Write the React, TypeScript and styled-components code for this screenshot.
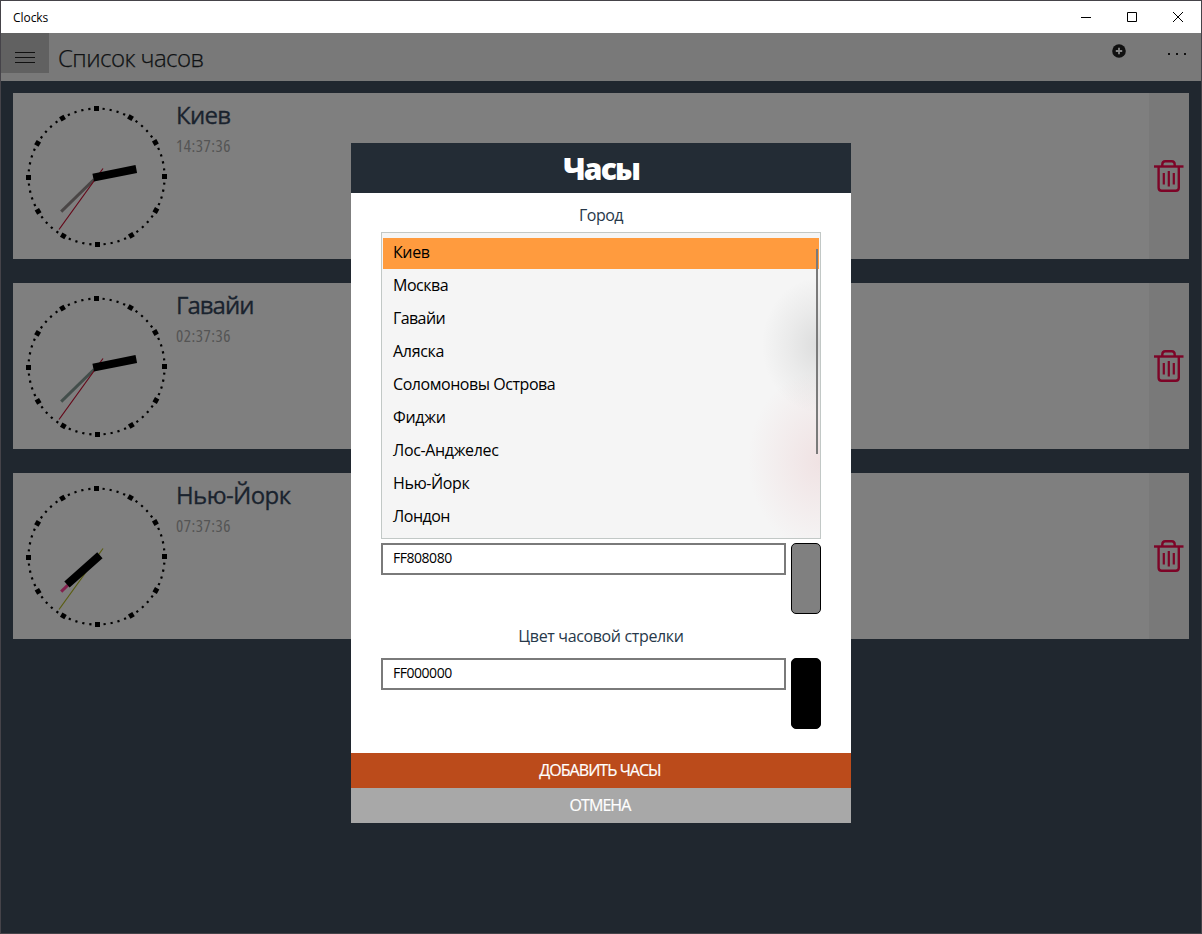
import React from "react";
import styled, { createGlobalStyle } from "styled-components";

const GlobalStyle = createGlobalStyle`
  *, *::before, *::after { box-sizing: border-box; }
  body { margin: 0; overflow: hidden; }
  svg { flex: none; }
`;

const ui = `"Open Sans", "Noto Sans", sans-serif`;

const Window = styled.div`
  position: relative;
  display: flex;
  flex-direction: column;
  width: 1202px;
  height: 934px;
  border: 1px solid #454349;
  background: #20272f;
  font-family: ${ui};
  font-size: 16px;
  white-space: nowrap;
`;

const TitleBar = styled.header`
  display: flex;
  align-items: center;
  justify-content: space-between;
  height: 32px;
  padding-left: 12px;
  background: #fff;
  color: #000;
  font-size: 12px;
  letter-spacing: -0.05px;
`;

const WindowControls = styled.div`
  display: flex;
`;

const WindowButton = styled.span`
  display: grid;
  place-items: center;
  width: 46px;
  height: 32px;
`;

const Toolbar = styled.div`
  display: flex;
  height: 48px;
  background: #797979;
  color: #101214;
`;

const MenuButton = styled.div`
  display: flex;
  align-items: center;
  justify-content: center;
  width: 48px;
  height: 40px;
  padding-top: 9px;
  background: #616161;
`;

const PageTitle = styled.h1`
  flex: 1;
  margin: 0;
  padding: 8px 0 0 9px;
  font-size: 24px;
  font-weight: 300;
  line-height: 33px;
  letter-spacing: -0.55px;
  -webkit-text-stroke: 0.25px currentColor;
`;

const ToolbarActions = styled.div`
  display: flex;
  gap: 42px;
  padding: 11px 15px 0 0;
`;

const ClockList = styled.main`
  display: flex;
  flex-direction: column;
  gap: 24px;
  padding: 12px;
`;

const Card = styled.article`
  display: flex;
  height: 166px;
  background: #7f7f7f;
`;

const CardInfo = styled.div`
  flex: 1;
  padding: 5px 0 0 8px;
`;

const City = styled.h2<{ $spacing: number }>`
  margin: 0;
  font-size: 24px;
  font-weight: 400;
  line-height: 33px;
  letter-spacing: ${(p) => p.$spacing}px;
  color: #1a232e;
  -webkit-text-stroke: 0.3px currentColor;
`;

const Time = styled.p`
  margin: 3px 0 0;
  font-size: 17px;
  font-stretch: 75%;
  line-height: 24px;
  letter-spacing: 0.5px;
  color: #545454;
`;

const DeleteButton = styled.div`
  display: grid;
  place-items: center;
  width: 40px;
  background: #797979;
`;

const Dialog = styled.section`
  position: absolute;
  top: 142px;
  left: 350px;
  display: flex;
  flex-direction: column;
  width: 500px;
  height: 680px;
  background: #fff;
`;

const DialogTitle = styled.h2`
  height: 50px;
  margin: 0;
  background: #232c35;
  color: #fff;
  font-size: 30px;
  font-weight: 800;
  line-height: 51px;
  letter-spacing: -1.9px;
  text-align: center;
`;

const Form = styled.div`
  display: flex;
  flex: 1;
  flex-direction: column;
  padding: 10px 30px 0;
`;

const Label = styled.div<{ $spacing: number }>`
  height: 24px;
  line-height: 24px;
  letter-spacing: ${(p) => p.$spacing}px;
  text-align: center;
  color: #27384a;
`;

const CityOptions = styled.div`
  position: relative;
  height: 307px;
  margin: 5px 0 4px;
  padding: 5px 1px 0;
  border: 1px solid #c2c8c6;
  background:
    radial-gradient(ellipse 58px 68px at 100% 112px, rgba(130, 132, 132, 0.22), rgba(130, 132, 132, 0.09) 55%, transparent),
    radial-gradient(ellipse 72px 90px at 100% 228px, rgba(220, 150, 155, 0.2), rgba(220, 150, 155, 0.09) 55%, transparent),
    #f5f5f5;
`;

const Option = styled.div<{ $selected?: boolean; $spacing: number }>`
  height: 31px;
  margin-bottom: 2px;
  padding-left: 10px;
  background: ${(p) => (p.$selected ? "#ff9b3e" : "transparent")};
  color: #000;
  line-height: 28px;
  letter-spacing: ${(p) => p.$spacing}px;
`;

const ScrollThumb = styled.div`
  position: absolute;
  top: 16px;
  right: 2px;
  width: 2px;
  height: 205px;
  background: #7a7a7a;
`;

const ColorRow = styled.div`
  display: flex;
  gap: 5px;
  height: 71px;
`;

const ColorInput = styled.div`
  flex: 1;
  height: 32px;
  padding-left: 10px;
  border: 2px solid #7a7a7a;
  font-size: 14px;
  line-height: 26px;
  letter-spacing: -0.47px;
`;

const Swatch = styled.div<{ $color: string }>`
  width: 30px;
  border: 1px solid #000;
  border-radius: 5px;
  background: ${(p) => p.$color};
`;

const FormGap = styled.div<{ $size: number }>`
  height: ${(p) => p.$size}px;
`;

const DialogButton = styled.div<{ $color: string }>`
  height: 35px;
  padding-right: 2px;
  background: ${(p) => p.$color};
  color: #fff;
  line-height: 35px;
  letter-spacing: -0.95px;
  text-align: center;
  -webkit-text-stroke: 0.2px currentColor;
`;

type Line = [number, number, number, number];

interface Clock {
  city: string;
  spacing: number;
  time: string;
  hour: Line;
  minute: Line;
  minuteColor: string;
  secondColor: string;
}

const clocks: Clock[] = [
  { city: "Киев", spacing: -0.7, time: "14:37:36", hour: [80.2, 84.6, 123.3, 76], minute: [81, 86.5, 48.2, 118.6], minuteColor: "#4a4646", secondColor: "#650718" },
  { city: "Гавайи", spacing: -1, time: "02:37:36", hour: [80.2, 84.6, 123.3, 76], minute: [81, 86.5, 48.2, 118.6], minuteColor: "#434e4b", secondColor: "#650718" },
  { city: "Нью-Йорк", spacing: -0.6, time: "07:37:36", hour: [86.9, 82.3, 54, 111.6], minute: [81, 86.5, 48.2, 118.6], minuteColor: "#82204d", secondColor: "#5b5d10" },
];

const ticks = Array.from({ length: 60 }, (_, i) => {
  const a = (i * Math.PI) / 30;
  return {
    major: i % 5 === 0,
    deg: i * 6,
    x: 83.5 + 68 * Math.sin(a) + Math.max(0, -Math.cos(a)),
    y: 83.5 - 68 * Math.cos(a) + Math.max(0, -Math.sin(a)),
  };
});

function Hand({ line, width, color }: { line: Line; width: number; color: string }) {
  const [x1, y1, x2, y2] = line;
  return <line x1={x1} y1={y1} x2={x2} y2={y2} stroke={color} strokeWidth={width} />;
}

function ClockFace({ clock }: { clock: Clock }) {
  return (
    <svg width="155" height="166" viewBox="0 0 155 166">
      {ticks.map((t) => {
        const s = t.major ? 5 : 2.2;
        return (
          <rect key={t.deg} x={t.x - s / 2} y={t.y - s / 2} width={s} height={s} transform={`rotate(${t.deg} ${t.x} ${t.y})`} />
        );
      })}
      <Hand line={clock.minute} width={3} color={clock.minuteColor} />
      <Hand line={[90, 75.5, 46, 136.5]} width={1.2} color={clock.secondColor} />
      <Hand line={clock.hour} width={8} color="#000" />
    </svg>
  );
}

function TrashIcon() {
  return (
    <svg width="32" height="36" viewBox="0 0 32 36" fill="none" stroke="#7d0427" strokeWidth="2.4">
      <path d="M1 8.5H30.5" />
      <path d="M9.3 8.5V6.5Q9.3 3.2 12.3 3.2H18.7Q21.7 3.2 21.7 6.5V8.5" />
      <path d="M5.6 9V29.8Q5.6 32.8 8.6 32.8H22.8Q25.8 32.8 25.8 29.8V9" />
      <path d="M10.8 15V26.5M15.8 13V28.5M20.8 15V26.5" strokeWidth="2.2" />
    </svg>
  );
}

const options: { name: string; spacing: number }[] = [
  { name: "Киев", spacing: -0.4 },
  { name: "Москва", spacing: -0.5 },
  { name: "Гавайи", spacing: -0.6 },
  { name: "Аляска", spacing: -0.3 },
  { name: "Соломоновы Острова", spacing: -0.45 },
  { name: "Фиджи", spacing: -0.3 },
  { name: "Лос-Анджелес", spacing: -0.35 },
  { name: "Нью-Йорк", spacing: -0.4 },
  { name: "Лондон", spacing: -0.5 },
];

export default function App() {
  return (
    <>
      <GlobalStyle />
      <Window>
        <TitleBar>
          <span>Clocks</span>
          <WindowControls>
            <WindowButton>
              <svg width="10" height="10"><path d="M0 5.5H10" stroke="#000" /></svg>
            </WindowButton>
            <WindowButton>
              <svg width="10" height="10"><path d="M.5.5H9.5V9.5H.5Z" fill="none" stroke="#000" /></svg>
            </WindowButton>
            <WindowButton>
              <svg width="10" height="10"><path d="M0 0L10 10M10 0L0 10" stroke="#000" /></svg>
            </WindowButton>
          </WindowControls>
        </TitleBar>
        <Toolbar>
          <MenuButton>
            <svg width="20" height="11"><path d="M0 .5H20M0 5.5H20M0 10.5H20" stroke="#101010" /></svg>
          </MenuButton>
          <PageTitle>Список часов</PageTitle>
          <ToolbarActions>
            <svg width="14" height="14">
              <circle cx="7" cy="7" r="6.8" fill="#101010" />
              <path d="M7 3.8V10.2M3.8 7H10.2" stroke="#858585" strokeWidth="1.8" />
            </svg>
            <svg width="18" height="14">
              <path d="M0 10H2M8 10H10M16 10H18" stroke="#101010" strokeWidth="2" />
            </svg>
          </ToolbarActions>
        </Toolbar>
        <ClockList>
          {clocks.map((c) => (
            <Card key={c.city}>
              <ClockFace clock={c} />
              <CardInfo>
                <City $spacing={c.spacing}>{c.city}</City>
                <Time>{c.time}</Time>
              </CardInfo>
              <DeleteButton><TrashIcon /></DeleteButton>
            </Card>
          ))}
        </ClockList>
        <Dialog>
          <DialogTitle>Часы</DialogTitle>
          <Form>
            <Label $spacing={-0.55}>Город</Label>
            <CityOptions>
              {options.map((o, i) => (
                <Option key={o.name} $selected={i === 0} $spacing={o.spacing}>{o.name}</Option>
              ))}
              <ScrollThumb />
            </CityOptions>
            <ColorRow>
              <ColorInput>FF808080</ColorInput>
              <Swatch $color="#808080" />
            </ColorRow>
            <FormGap $size={10} />
            <Label $spacing={-0.35}>Цвет часовой стрелки</Label>
            <FormGap $size={10} />
            <ColorRow>
              <ColorInput>FF000000</ColorInput>
              <Swatch $color="#000" />
            </ColorRow>
          </Form>
          <DialogButton $color="#bb4b1b">ДОБАВИТЬ ЧАСЫ</DialogButton>
          <DialogButton $color="#a8a8a8">ОТМЕНА</DialogButton>
        </Dialog>
      </Window>
    </>
  );
}
